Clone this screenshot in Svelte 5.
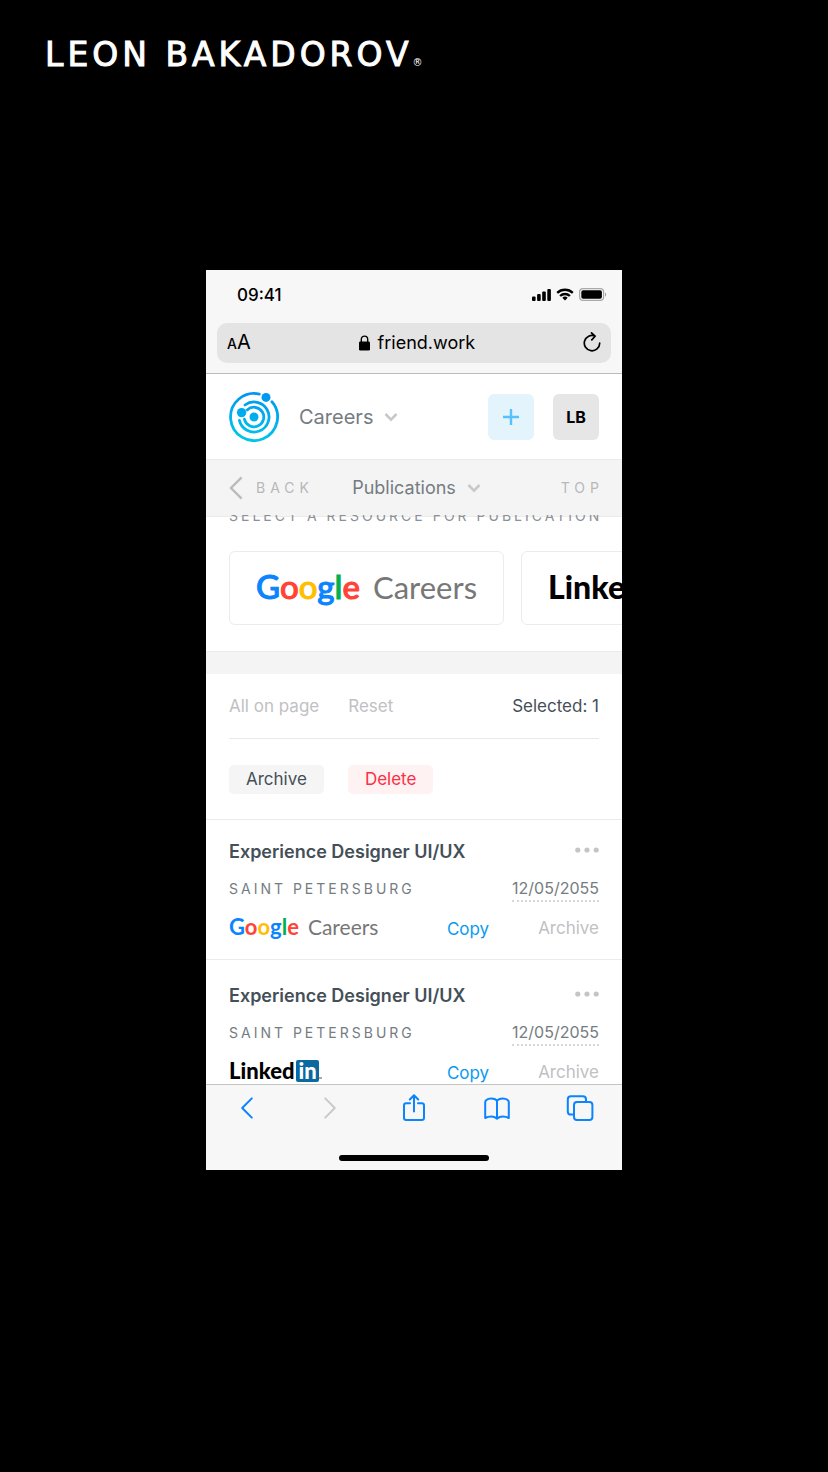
<script>
  const google = [
    ['G', '#0a84ff'],
    ['o', '#ff4336'],
    ['o', '#ffbf00'],
    ['g', '#0a84ff'],
    ['l', '#00b04f'],
    ['e', '#ff4336']
  ];

  const items = [
    { title: 'Experience Designer UI/UX', city: 'Saint Petersburg', date: '12/05/2055', source: 'google' },
    { title: 'Experience Designer UI/UX', city: 'Saint Petersburg', date: '12/05/2055', source: 'linkedin' }
  ];
</script>

{#snippet googleLogo()}
  <span class="google"><span class="word">{#each google as [letter, color]}<span style:color>{letter}</span>{/each}</span><span class="sub">Careers</span></span>
{/snippet}

{#snippet linkedinLogo()}
  <span class="linkedin">Linked<span class="in">in</span><i class="mark"></i></span>
{/snippet}

{#snippet chevron()}
  <svg class="chevron" width="14" height="10" viewBox="0 0 14 10" aria-hidden="true"><path d="M1.5 2 7 7.6 12.5 2" fill="none" stroke="#c7c8c9" stroke-width="2.5" /></svg>
{/snippet}

<div class="page">
  <header class="brand">LEON BAKADOROV<sup>®</sup></header>

  <main class="phone">
    <div class="chrome">
      <div class="status">
        <span class="time">09:41</span>
        <span class="signals">
          <svg width="19" height="12" viewBox="0 0 19 12" aria-hidden="true">
            <rect x="0" y="7.5" width="3.6" height="4.5" rx="1" /><rect x="5.1" y="5" width="3.6" height="7" rx="1" /><rect x="10.2" y="2.5" width="3.6" height="9.5" rx="1" /><rect x="15.3" y="0" width="3.6" height="12" rx="1" />
          </svg>
          <svg width="18" height="13" viewBox="0 0 18 13" aria-hidden="true">
            <g fill="none" stroke="#000" stroke-width="2.3"><path d="M1.2 4.9a11.2 11.2 0 0 1 15.6 0" /><path d="M4.1 8a7 7 0 0 1 9.8 0" /></g>
            <path d="M9 12.4 6.3 9.8a3.9 3.9 0 0 1 5.4 0z" />
          </svg>
          <svg width="28" height="13" viewBox="0 0 28 13" aria-hidden="true">
            <rect x=".6" y=".6" width="24" height="11.8" rx="3.4" fill="none" stroke="#a9a9a9" stroke-width="1.2" /><rect x="2.3" y="2.2" width="20.6" height="8.6" rx="1.8" /><path d="M26 4.4c1.6.6 1.6 3.6 0 4.2z" fill="#a9a9a9" />
          </svg>
        </span>
      </div>
      <div class="address">
        <button class="aa" aria-label="Page text size"><small>A</small>A</button>
        <a class="url" href="#top">
          <svg width="11" height="16" viewBox="0 0 11 16" aria-hidden="true"><path d="M2.3 7V4.3a3.2 3.2 0 0 1 6.4 0V7" fill="none" stroke="#000" stroke-width="1.4" /><rect x="0" y="6.6" width="11" height="9" rx="1.4" /></svg>
          friend.work
        </a>
        <button aria-label="Reload">
          <svg width="18" height="22" viewBox="0 0 18 22" fill="none" stroke="#000" stroke-width="1.7" stroke-linecap="round" stroke-linejoin="round" aria-hidden="true"><path d="M12 4A7.700 7.700 0 1 0 16.700 11.200M8.500 .9l3.600 3.300-3.300 3.700" /></svg>
        </button>
      </div>
    </div>

    <div class="view">
      <div class="top" id="top">
        <svg width="50" height="50" viewBox="0 0 50 50" role="img" aria-label="Friend Work">
          <defs><linearGradient id="sky" gradientUnits="userSpaceOnUse" x1="30" y1="0" x2="22" y2="50"><stop offset="0" stop-color="#0095f2" /><stop offset="1" stop-color="#00c8e6" /></linearGradient></defs>
          <g fill="none" stroke="url(#sky)" stroke-width="2.8" stroke-linecap="round">
            <path d="M42.9 9.7A23.500 23.500 0 1 1 30.300 2.100" />
            <path d="M16 13A15 15 0 1 1 10.400 28.400" />
            <path d="M18.200 17.900A9.800 9.800 0 1 1 15.400 27.200" />
          </g>
          <g fill="url(#sky)"><circle cx="25" cy="25" r="4.500" /><circle cx="12.600" cy="20.600" r="4.700" /><circle cx="37" cy="5.400" r="4.500" /></g>
        </svg>
        <label class="menu large">
          <select aria-label="Section"><option>Careers</option></select>
          {@render chevron()}
        </label>
        <button class="tile add" aria-label="Add">
          <svg width="16" height="16" viewBox="0 0 16 16" aria-hidden="true"><path d="M8 0v16M0 8h16" stroke="#56c1fa" stroke-width="2.4" /></svg>
        </button>
        <button class="tile user">LB</button>
      </div>

      <nav class="crumbs">
        <button class="spaced"><svg width="14" height="24" viewBox="0 0 14 24" aria-hidden="true"><path d="M12.6 1.4 2 12l10.6 10.6" fill="none" stroke="#b9bbbd" stroke-width="2.4" /></svg>Back</button>
        <label class="menu">
          <select aria-label="Page"><option>Publications</option></select>
          {@render chevron()}
        </label>
        <button class="spaced end">Top</button>
      </nav>

      <section class="resources">
        <h2><span>Select a resource for publication</span></h2>
        <div class="cards">
          <button class="card" aria-label="Google Careers">{@render googleLogo()}</button>
          <button class="card" aria-label="LinkedIn">{@render linkedinLogo()}</button>
        </div>
      </section>

      <section class="tools">
        <div class="pick">
          <button>All on page</button>
          <button>Reset</button>
          <span>Selected: 1</span>
        </div>
        <div class="actions">
          <button>Archive</button>
          <button class="danger">Delete</button>
        </div>
      </section>

      <ul>
        {#each items as item}
          <li>
            <div class="row title">
              <h3>{item.title}</h3>
              <button class="more" aria-label="More"><svg width="24" height="6" viewBox="0 0 24 6" fill="#c3c5c7" aria-hidden="true"><circle cx="2.8" cy="3" r="2.6" /><circle cx="12" cy="3" r="2.6" /><circle cx="21.2" cy="3" r="2.6" /></svg></button>
            </div>
            <div class="row place">
              <span class="city">{item.city}</span>
              <button class="date">{item.date}</button>
            </div>
            <div class="row links">
              <span class="source">
                {#if item.source === 'google'}{@render googleLogo()}{:else}{@render linkedinLogo()}{/if}
              </span>
              <button class="copy">Copy</button>
              <button class="archive">Archive</button>
            </div>
          </li>
        {/each}
      </ul>
    </div>

    <footer>
      <nav class="browser">
        <button aria-label="Previous page"><svg width="28" height="28" viewBox="0 0 28 28"><path d="M18.8 4.4 9.2 14l9.6 9.6" /></svg></button>
        <button aria-label="Next page" disabled><svg width="28" height="28" viewBox="0 0 28 28"><path d="M9.2 4.4 18.8 14l-9.6 9.6" /></svg></button>
        <button aria-label="Share"><svg width="28" height="28" viewBox="0 0 28 28"><path d="M10 9.200H6.200Q4 9.200 4 11.400V23.800Q4 26 6.200 26H21.800Q24 26 24 23.800V11.400Q24 9.200 21.800 9.200H18M14 17.500V1.500M9.800 5.500 14 1.300 18.200 5.500" /></svg></button>
        <button aria-label="Bookmarks"><svg width="28" height="28" viewBox="0 0 28 28"><path d="M14 6.500Q12 4.400 8.400 4.400T3.600 5.800Q2.200 6.600 2.200 8.200V24Q5 22.600 8.200 22.600T14 24.600Q16.600 22.600 19.800 22.600T25.800 24V8.200Q25.800 6.600 24.400 5.800 22.800 4.400 19.600 4.400T14 6.500V24" /></svg></button>
        <button aria-label="Tabs"><svg width="28" height="28" viewBox="0 0 28 28"><rect x="8" y="8" width="18.400" height="18" rx="3" /><path d="M8 20.600H5Q1.800 20.600 1.800 17.400V5.400Q1.800 2.200 5 2.200H16.800Q20 2.200 20 5.400V8" /></svg></button>
      </nav>
      <div class="home"></div>
    </footer>
  </main>
</div>

<style>
  :global(body) {
    background: #000;
  }

  .page {
    min-height: 100vh;
    box-sizing: border-box;
    padding-bottom: 40px;
    background: #000;
    color: #454f58;
    font-family: Inter, 'Liberation Sans', sans-serif;
    font-size: 17px;
    line-height: 24px;
  }

  button,
  select {
    margin: 0;
    padding: 0;
    border: 0;
    background: none;
    color: inherit;
    font: inherit;
    letter-spacing: inherit;
    cursor: pointer;
  }

  h2,
  h3,
  ul {
    margin: 0;
    padding: 0;
    list-style: none;
  }

  svg {
    display: block;
    flex: none;
  }

  .brand {
    padding: 35px 45px 0;
    color: #fff;
    font-family: 'DejaVu Sans', sans-serif;
    font-size: 33px;
    line-height: 40px;
    letter-spacing: 4px;
    -webkit-text-stroke: 1px #fff;
  }

  .brand sup {
    font-size: 10px;
    line-height: 10px;
    vertical-align: baseline;
    -webkit-text-stroke: 0;
  }

  .phone {
    display: flex;
    flex-direction: column;
    max-width: 416px;
    aspect-ratio: 104 / 225;
    margin: 195px auto 0;
    overflow: hidden;
    background: #fff;
  }

  .chrome {
    padding: 0 11px 10px;
    border-bottom: 1px solid #bcbcbc;
    background: #f7f7f7;
    color: #000;
  }

  .status {
    display: flex;
    align-items: center;
    justify-content: space-between;
    height: 49px;
    padding: 0 4px 4px 20px;
  }

  .time {
    font-weight: 500;
  }

  .signals {
    display: flex;
    align-items: center;
    gap: 5px;
  }

  .address {
    display: flex;
    align-items: center;
    justify-content: space-between;
    height: 40px;
    padding: 0 10px;
    border-radius: 10px;
    background: #e4e4e4;
  }

  .aa {
    font-size: 20px;
  }

  .aa small {
    font-size: 14px;
    font-weight: 500;
  }

  .url {
    display: flex;
    align-items: center;
    gap: 8px;
    color: #000;
    font-size: 18px;
    text-decoration: none;
  }

  .view {
    flex: 1;
    min-height: 0;
    overflow: hidden;
  }

  .top {
    display: flex;
    align-items: center;
    height: 85px;
    padding: 0 23px;
  }

  .menu {
    display: flex;
    align-items: center;
    gap: 11px;
    color: #757c82;
    font-size: 18px;
  }

  .menu select {
    appearance: none;
    field-sizing: content;
  }

  .large {
    margin: 0 auto 0 20px;
    font-size: 20px;
  }

  .chevron {
    pointer-events: none;
  }

  .tile {
    display: grid;
    place-items: center;
    width: 46px;
    height: 46px;
    border-radius: 6px;
  }

  .add {
    margin-right: 19px;
    background: #e4f4fd;
  }

  .user {
    background: #e6e6e6;
    color: #000;
    font-size: 16px;
    font-weight: 700;
  }

  .crumbs {
    display: grid;
    grid-template-columns: 1fr auto 1fr;
    align-items: center;
    height: 56px;
    padding: 0 18px 0 23px;
    border: solid #ebebeb;
    border-width: 1px 0;
    background: #f4f4f4;
  }

  .spaced {
    display: flex;
    align-items: center;
    gap: 13px;
    color: #b6b8ba;
    font-size: 14px;
    letter-spacing: 5px;
    text-transform: uppercase;
  }

  .end {
    justify-self: end;
  }

  .resources {
    position: relative;
    margin-top: -2px;
    border-bottom: 1px solid #e9e9e9;
  }

  h2 {
    display: flex;
    align-items: flex-end;
    height: 10px;
    padding-left: 23px;
    overflow: hidden;
    color: #8b9197;
    font-size: 14px;
    font-weight: 400;
    line-height: 18px;
    letter-spacing: 3px;
    text-transform: uppercase;
    white-space: nowrap;
  }

  .cards {
    display: flex;
    gap: 17px;
    padding: 26px 0 26px 23px;
  }

  .card {
    flex: none;
    padding: 15px 26px 18px;
    border: 1px solid #ececec;
    border-radius: 6px;
  }

  .google {
    display: flex;
    align-items: baseline;
    gap: 13px;
    font-family: Lato, sans-serif;
    font-size: 33px;
    line-height: 38px;
  }

  .word {
    font-weight: 500;
    -webkit-text-stroke: 1px;
  }

  .sub {
    color: #777;
    font-size: 31px;
  }

  .linkedin {
    display: flex;
    align-items: center;
    color: #000;
    font-family: Lato, sans-serif;
    font-size: 32px;
    font-weight: 900;
    line-height: 38px;
  }

  .in {
    margin-left: 4px;
    padding: 0 4px;
    border-radius: 2px;
    background: #0b68a0;
    color: #fff;
  }

  .mark {
    align-self: flex-end;
    width: 3px;
    height: 2px;
    margin-bottom: 3px;
    background: #aaa;
  }

  .tools {
    border-top: 22px solid #f4f4f4;
    border-bottom: 1px solid #ebebeb;
  }

  .pick {
    display: flex;
    gap: 29px;
    margin: 0 23px;
    padding: 20px 0;
    border-bottom: 1px solid #e9e9e9;
    color: #bfc1c4;
  }

  .pick span {
    margin-left: auto;
    color: #454f58;
  }

  .actions {
    display: flex;
    gap: 24px;
    padding: 26px 23px 25px;
  }

  .actions button {
    padding: 2px 17px 3px;
    border-radius: 5px;
    background: #f5f5f5;
  }

  .actions .danger {
    background: #fff2f3;
    color: #fb2f45;
  }

  li {
    padding: 20px 23px 19px;
    border-bottom: 1px solid #ebebeb;
  }

  li + li {
    padding-top: 24px;
  }

  .row {
    display: flex;
    align-items: center;
    justify-content: space-between;
    height: 24px;
  }

  .more {
    padding-bottom: 4px;
  }

  h3 {
    font-size: 18px;
    font-weight: 600;
  }

  .place {
    height: 26px;
    margin-top: 12px;
    color: #757c82;
  }

  .city {
    font-size: 14px;
    letter-spacing: 3px;
    text-transform: uppercase;
  }

  .date {
    border-bottom: 2px dotted #d5d6d8;
    font-size: 16px;
  }

  .links {
    gap: 49px;
    margin-top: 14px;
  }

  .source {
    margin-right: auto;
    padding-bottom: 2px;
  }

  .source .google {
    gap: 9px;
    font-size: 22px;
    line-height: 24px;
  }

  .source .word {
    font-weight: 700;
    -webkit-text-stroke: 0;
  }

  .source .sub {
    font-size: 21px;
  }

  .source .linkedin {
    font-size: 22px;
    line-height: 22px;
  }

  .source .in {
    margin-left: 2px;
    padding: 0 2px;
  }

  .copy {
    padding-top: 2px;
    color: #0a9bee;
  }

  .archive {
    color: #bfc1c4;
  }

  footer {
    padding: 9px 0;
    border-top: 1px solid #c4c4c4;
    background: #f7f7f7;
  }

  .browser {
    display: flex;
    justify-content: space-between;
    padding: 0 28px 0 27px;
  }

  .browser svg {
    fill: none;
    stroke: #0a84ff;
    stroke-width: 2;
    stroke-linecap: round;
    stroke-linejoin: round;
  }

  .browser button:disabled svg {
    stroke: #c9c9c9;
  }

  .home {
    width: 36%;
    height: 6px;
    margin: 33px auto 0;
    border-radius: 3px;
    background: #000;
  }
</style>
